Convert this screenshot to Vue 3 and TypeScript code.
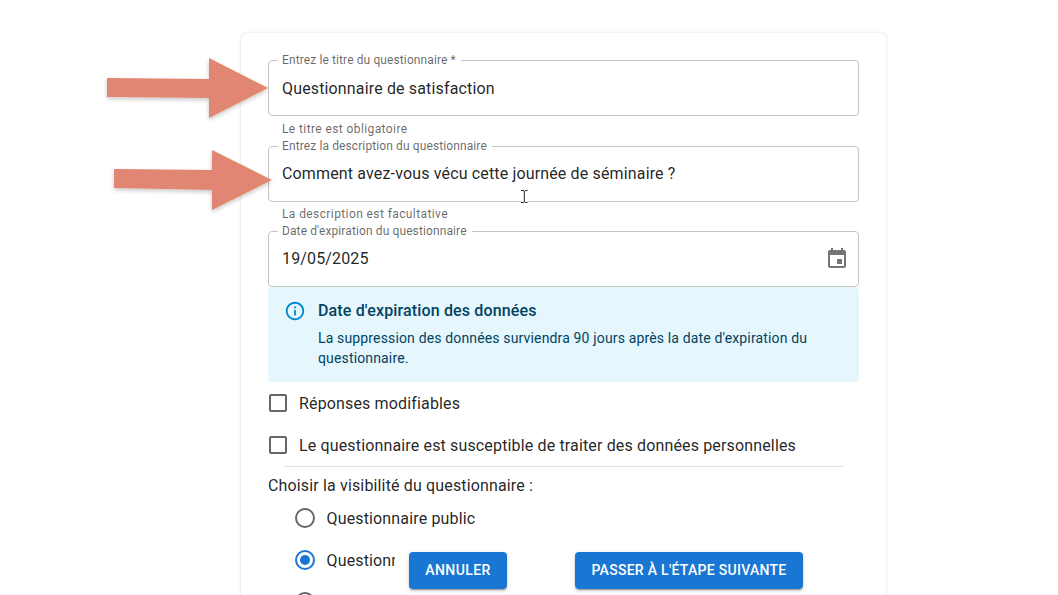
<script setup lang="ts">
interface Field { label: string; value: string; helper?: string; date?: boolean }
const fields: Field[] = [
  { label: 'Entrez le titre du questionnaire *', value: 'Questionnaire de satisfaction', helper: 'Le titre est obligatoire' },
  { label: 'Entrez la description du questionnaire', value: 'Comment avez-vous vécu cette journée de séminaire ?', helper: 'La description est facultative' },
  { label: "Date d'expiration du questionnaire", value: '19/05/2025', date: true },
]
const checks = ['Réponses modifiables', 'Le questionnaire est susceptible de traiter des données personnelles']
const radios = [
  { label: 'Questionnaire public', on: false },
  { label: 'Questionnaire privé', on: true },
  { label: 'Questionnaire restreint', on: false },
]
</script>

<template>
  <div class="page">
    <main class="card">
      <div v-for="f in fields" :key="f.label" class="group">
        <div class="field">
          <span class="legend">{{ f.label }}</span>
          <span class="value" :class="{ lifted: f.date }">{{ f.value }}</span>
          <svg v-if="f.date" class="cal" viewBox="0 0 24 24" width="24" height="24">
            <path fill="#757575" d="M17 12h-5v5h5v-5zM16 1v2H8V1H6v2H5c-1.11 0-1.99.9-1.99 2L3 19c0 1.1.89 2 2 2h14c1.1 0 2-.9 2-2V5c0-1.1-.9-2-2-2h-1V1h-2zm3 18H5V8h14v11z" />
          </svg>
        </div>
        <p v-if="f.helper" class="helper">{{ f.helper }}</p>
      </div>

      <section class="alert">
        <svg class="alert-icon" viewBox="0 0 24 24" width="22" height="22">
          <path fill="#0288d1" d="M11 7h2v2h-2zm0 4h2v6h-2zm1-9C6.48 2 2 6.48 2 12s4.48 10 10 10 10-4.48 10-10S17.52 2 12 2zm0 18c-4.41 0-8-3.59-8-8s3.59-8 8-8 8 3.59 8 8-3.59 8-8 8z" />
        </svg>
        <div>
          <h3 class="alert-title">Date d'expiration des données</h3>
          <p class="alert-text">La suppression des données surviendra 90 jours après la date d'expiration du questionnaire.</p>
        </div>
      </section>

      <div class="checks">
        <label v-for="c in checks" :key="c" class="check">
          <span class="box"></span>
          <span>{{ c }}</span>
        </label>
      </div>
      <hr class="divider" />
      <p class="choose">Choisir la visibilité du questionnaire :</p>
      <div class="radios">
        <label v-for="r in radios" :key="r.label" class="radio">
          <span class="ring" :class="{ on: r.on }"></span>
          <span>{{ r.label }}</span>
        </label>
      </div>
    </main>

    <footer class="actions">
      <button class="btn annuler">Annuler</button>
      <button class="btn suivante">Passer à l'étape suivante</button>
    </footer>

    <svg class="overlay" viewBox="0 0 1058 595" width="1058" height="595">
      <defs>
        <filter id="soft" x="-10%" y="-20%" width="120%" height="150%">
          <feDropShadow dx="0" dy="2" stdDeviation="2" flood-color="#000" flood-opacity="0.22" />
        </filter>
      </defs>
      <polygon filter="url(#soft)" fill="#e08672" points="107,78 209,79 209,58 268,88 209,118 209,98 107,97" />
      <polygon filter="url(#soft)" fill="#e08672" points="114,169 212,170 212,150 272,180 212,210 212,190 114,188" />
      <path fill="none" stroke="#fff" stroke-width="3" d="M521 190.500h6.500M521 202.500h6.500M524.200 190.500v12" />
      <path fill="none" stroke="#222" stroke-width="1" d="M521 190.500h2.500l.8.800.8-.800h2.400M521 202.500h2.500l.8-.800.8.800h2.400M524.300 191v11" />
    </svg>
  </div>
</template>

<style scoped>
.page {
  position: relative;
  width: 1058px;
  height: 595px;
  overflow: hidden;
  background: #fff;
  font-family: Roboto, "Liberation Sans", sans-serif;
  color: rgba(0, 0, 0, 0.87);
}
.card {
  box-sizing: border-box;
  width: 645px;
  margin: 33px 0 0 241px;
  padding: 27px 27px 60px;
  border-radius: 6px;
  box-shadow: 0 0 3px rgba(0, 0, 0, 0.16);
  background: #fff;
}
.group { display: flex; flex-direction: column; }
.field {
  position: relative;
  box-sizing: border-box;
  height: 56px;
  display: flex;
  align-items: center;
  justify-content: space-between;
  padding: 0 9px 0 13px;
  border: 1px solid #c4c4c4;
  border-radius: 4px;
}
.legend {
  position: absolute;
  top: -8px;
  left: 9px;
  padding: 0 5px 0 4px;
  background: #fff;
  font-size: 12px;
  line-height: 15px;
  letter-spacing: 0.11px;
  color: rgba(0, 0, 0, 0.6);
}
.value { font-size: 16px; letter-spacing: 0.15px; }
.value.lifted { margin-bottom: 2px; }
.cal { display: block; }
.helper {
  box-sizing: border-box;
  height: 29.5px;
  margin: 0;
  padding: 3px 14px 0;
  font-size: 12px;
  line-height: 20px;
  letter-spacing: 0.4px;
  color: rgba(0, 0, 0, 0.6);
}
.group:nth-child(2) .helper { padding-top: 2.5px; }
.alert {
  box-sizing: border-box;
  height: 95px;
  display: flex;
  gap: 12px;
  padding: 13px 16px;
  background: #e5f6fd;
  border-radius: 4px;
  color: #014361;
}
.alert-icon { flex: none; }
.alert-title {
  margin: 0;
  font-size: 16px;
  font-weight: 500;
  line-height: 22px;
  letter-spacing: 0.15px;
}
.alert-text {
  margin: 6px 0 0;
  font-size: 14px;
  line-height: 20px;
  letter-spacing: 0.15px;
}
.checks { display: flex; flex-direction: column; }
.check {
  height: 42px;
  display: flex;
  align-items: center;
  gap: 12px;
  padding-left: 1px;
  font-size: 16px;
  letter-spacing: 0.15px;
}
.box {
  box-sizing: border-box;
  width: 18px;
  height: 18px;
  border: 2px solid #666;
  border-radius: 2px;
}
.divider {
  height: 1px;
  margin: 0 16px;
  border: 0;
  background: #e0e0e0;
}
.choose {
  margin: 9px 0 0;
  font-size: 16px;
  line-height: 20px;
  letter-spacing: 0.15px;
}
.radios { display: flex; flex-direction: column; margin-top: 1px; padding-left: 27px; }
.radio {
  height: 42px;
  display: flex;
  align-items: center;
  gap: 11.5px;
  font-size: 16px;
  letter-spacing: 0.15px;
  white-space: nowrap;
}
.ring {
  position: relative;
  box-sizing: border-box;
  width: 20px;
  height: 20px;
  border: 2px solid #666;
  border-radius: 50%;
}
.ring.on { border-color: #1976d2; }
.ring.on::after {
  content: "";
  position: absolute;
  inset: 3px;
  border-radius: 50%;
  background: #1976d2;
}
.actions {
  position: absolute;
  left: 395px;
  top: 538px;
  width: 470px;
  height: 57px;
  box-sizing: border-box;
  display: flex;
  align-items: flex-start;
  gap: 68px;
  padding: 14px 0 0 14px;
  background: #fff;
}
.btn {
  height: 37px;
  padding: 0 0 1px;
  border: 0;
  border-radius: 4px;
  background: #1976d2;
  color: #fff;
  font-family: inherit;
  font-size: 14px;
  font-weight: 500;
  letter-spacing: 0.4px;
  text-transform: uppercase;
  white-space: nowrap;
  box-shadow: 0 3px 1px -2px rgba(0, 0, 0, 0.2), 0 2px 2px 0 rgba(0, 0, 0, 0.14), 0 1px 5px 0 rgba(0, 0, 0, 0.12);
}
.annuler { width: 98px; }
.suivante { width: 228px; letter-spacing: 0.28px; }
.overlay { position: absolute; inset: 0; pointer-events: none; }
</style>
